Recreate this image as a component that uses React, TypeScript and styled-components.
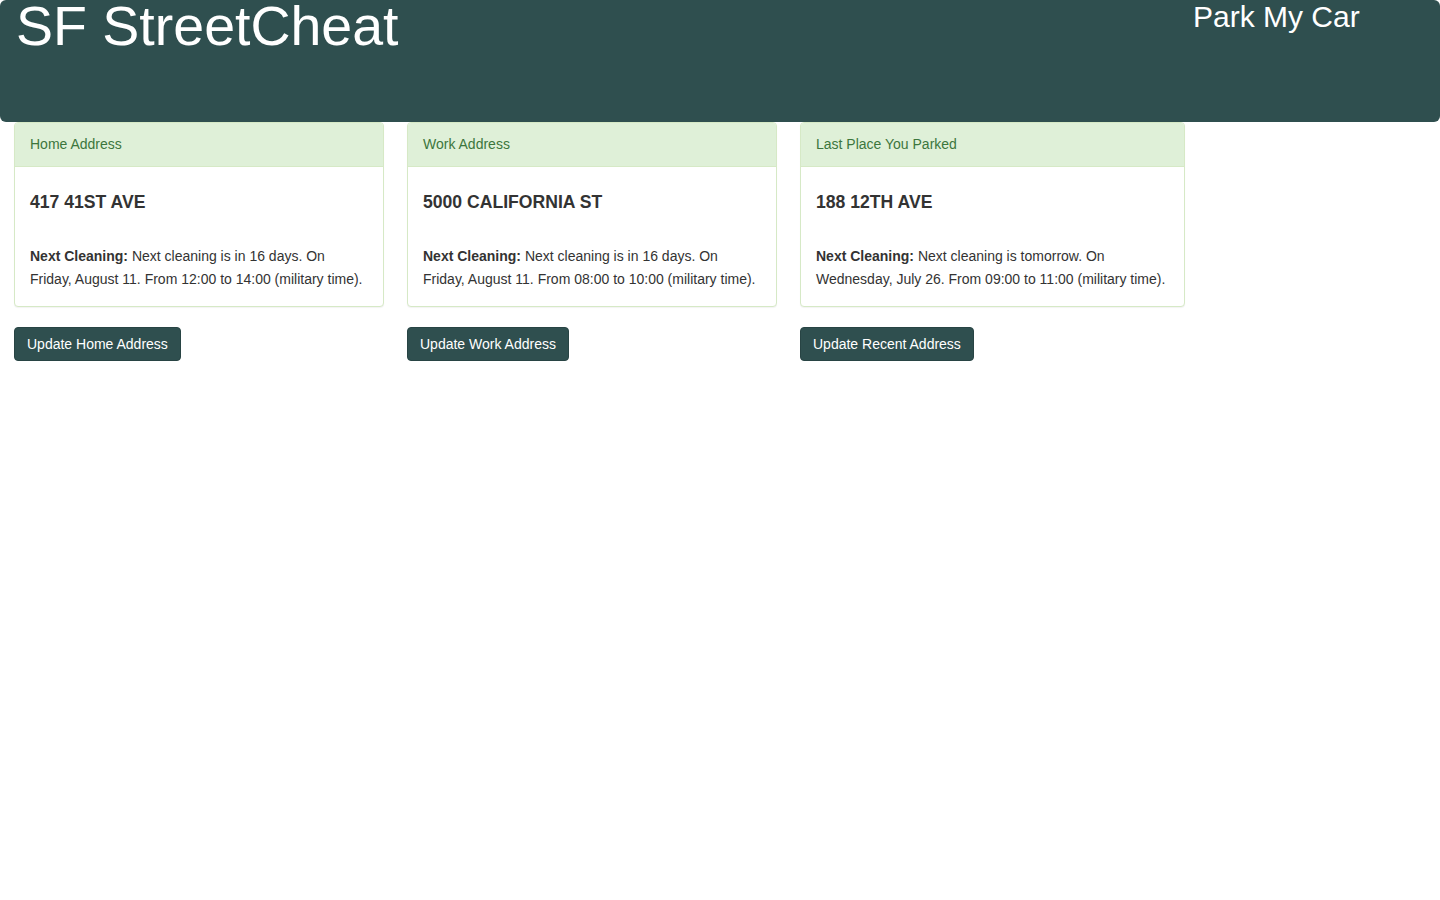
import React from "react";
import styled, { createGlobalStyle } from "styled-components";

const Global = createGlobalStyle`
  html, body { margin: 0; padding: 0; background: #fff; }
  body {
    font-family: "Liberation Sans", Arial, Helvetica, sans-serif;
    font-size: 14px;
    line-height: 1.42857;
    color: #333;
  }
  * { box-sizing: border-box; }
`;

const Header = styled.header`
  display: grid;
  grid-template-columns: 1fr 247px;
  height: 122px;
  background: #2f4f4f;
  border-radius: 6px;
  color: #fff;
`;

const Title = styled.h1`
  margin: 0;
  padding-left: 16px;
  font-size: 55.5px;
  line-height: 52px;
  font-weight: 400;
`;

const NavLink = styled.h2`
  margin: 0;
  padding-top: 2px;
  font-size: 30px;
  line-height: 30px;
  font-weight: 400;
  color: #fff;
`;

const Cards = styled.main`
  display: flex;
  gap: 23px;
  padding-left: 14px;
  align-items: flex-start;
`;

const Column = styled.section<{ $w: number }>`
  display: flex;
  flex-direction: column;
  align-items: flex-start;
  width: ${(p) => p.$w}px;
`;

const Panel = styled.div`
  width: 100%;
  border: 1px solid #d6e9c6;
  border-radius: 4px;
  background: #fff;
  box-shadow: 0 1px 1px rgba(0, 0, 0, 0.05);
  margin-bottom: 20px;
`;

const PanelHeading = styled.div`
  padding: 11px 15px 12px;
  background: #dff0d8;
  color: #3c763d;
  border-bottom: 1px solid #d6e9c6;
  border-radius: 3px 3px 0 0;
  line-height: 20px;
`;

const PanelBody = styled.div`
  padding: 15px;
`;

const Street = styled.h4`
  margin: 10px 0 0;
  font-size: 17.6px;
  line-height: 20px;
  font-weight: 700;
  color: #333;
`;

const Cleaning = styled.p`
  margin: 33px 0 0;
  line-height: 23px;
`;

const Button = styled.button`
  font-family: inherit;
  font-size: 14px;
  line-height: 20px;
  padding: 6px 12px;
  color: #fff;
  background: #2f4f4f;
  border: 1px solid #284444;
  border-radius: 4px;
  cursor: pointer;
`;

const data = [
  {
    w: 370,
    title: "Home Address",
    street: "417 41ST AVE",
    text: "Next cleaning is in 16 days. On Friday, August 11. From 12:00 to 14:00 (military time).",
    btn: "Update Home Address",
  },
  {
    w: 370,
    title: "Work Address",
    street: "5000 CALIFORNIA ST",
    text: "Next cleaning is in 16 days. On Friday, August 11. From 08:00 to 10:00 (military time).",
    btn: "Update Work Address",
  },
  {
    w: 385,
    title: "Last Place You Parked",
    street: "188 12TH AVE",
    text: "Next cleaning is tomorrow. On Wednesday, July 26. From 09:00 to 11:00 (military time).",
    btn: "Update Recent Address",
  },
];

export default function App() {
  return (
    <>
      <Global />
      <Header>
        <Title>SF StreetCheat</Title>
        <NavLink>Park My Car</NavLink>
      </Header>
      <Cards>
        {data.map((d) => (
          <Column key={d.title} $w={d.w}>
            <Panel>
              <PanelHeading>{d.title}</PanelHeading>
              <PanelBody>
                <Street>{d.street}</Street>
                <Cleaning>
                  <b>Next Cleaning:</b> {d.text}
                </Cleaning>
              </PanelBody>
            </Panel>
            <Button>{d.btn}</Button>
          </Column>
        ))}
      </Cards>
    </>
  );
}
